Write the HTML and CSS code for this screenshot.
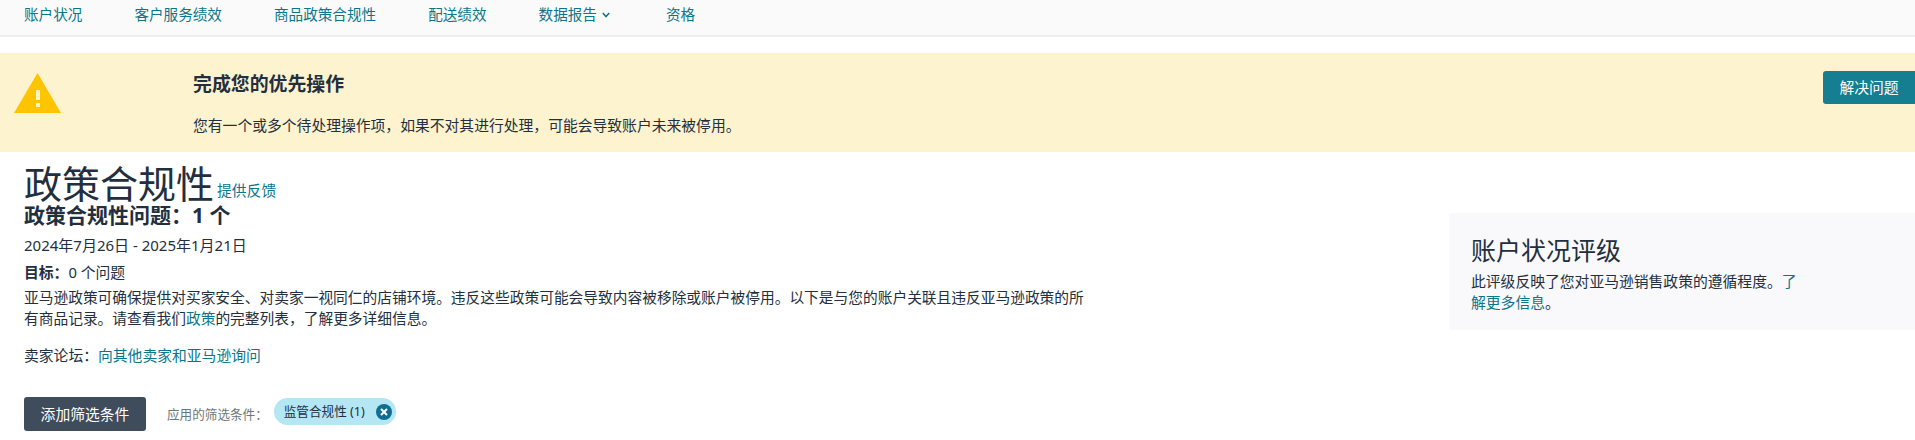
FILE: index.html
```html
<!DOCTYPE html>
<html lang="zh-CN">
<head>
<meta charset="utf-8">
<title>政策合规性</title>
<link rel="stylesheet" href="styles.css">
</head>
<body>
<nav class="tabs">
  <a class="tab" href="#">账户状况</a>
  <a class="tab" href="#">客户服务绩效</a>
  <a class="tab" href="#">商品政策合规性</a>
  <a class="tab" href="#">配送绩效</a>
  <a class="tab tab-menu" href="#">数据报告
    <svg class="chevron" viewBox="0 0 8 6" width="8" height="6"><path d="M.8 1 4 4.6 7.2 1" fill="none" stroke="currentColor" stroke-width="1.5"/></svg>
  </a>
  <a class="tab" href="#">资格</a>
</nav>
<section class="alert">
  <div class="alert-icon">
    <svg viewBox="0 0 47 40" width="47" height="40"><path d="M23.5 0 47 40H0Z" fill="#ffc400"/><path d="M22 17h4v10h-4zM22 30h4v4h-4z" fill="#fef3cf"/></svg>
  </div>
  <div class="alert-body">
    <h2 class="alert-title">完成您的优先操作</h2>
    <p class="alert-text">您有一个或多个待处理操作项，如果不对其进行处理，可能会导致账户未来被停用。</p>
  </div>
  <a class="resolve" href="#">解决问题</a>
</section>
<main class="content">
  <div class="details">
    <div class="title-row">
      <h1 class="title">政策合规性</h1>
      <a class="link" href="#">提供反馈</a>
    </div>
    <h2 class="count">政策合规性问题：1 个</h2>
    <p class="dates">2024年7月26日 - 2025年1月21日</p>
    <p class="goal"><b class="goal-label">目标：</b>0 个问题</p>
    <p class="intro">亚马逊政策可确保提供对买家安全、对卖家一视同仁的店铺环境。违反这些政策可能会导致内容被移除或账户被停用。以下是与您的账户关联且违反亚马逊政策的所有商品记录。请查看我们<a class="link" href="#">政策</a>的完整列表，了解更多详细信息。</p>
    <p class="forum">卖家论坛：<a class="link" href="#">向其他卖家和亚马逊询问</a></p>
    <div class="filters">
      <button class="add-filter" type="button">添加筛选条件</button>
      <span class="filter-label">应用的筛选条件：</span>
      <span class="chip">监管合规性 (1)
        <svg class="chip-close" viewBox="0 0 16 16" width="16" height="16"><circle cx="8" cy="8" r="8" fill="#0f6f93"/><path d="M5 5l6 6M11 5l-6 6" stroke="#fff" stroke-width="2"/></svg>
      </span>
    </div>
  </div>
  <aside class="rating">
    <h2 class="rating-title">账户状况评级</h2>
    <p class="rating-text">此评级反映了您对亚马逊销售政策的遵循程度。<a class="link" href="#">了解更多信息</a>。</p>
  </aside>
</main>
</body>
</html>
```
FILE: styles.css
```css
* { box-sizing: border-box; }
html, body { margin: 0; padding: 0; }
body {
  background: #fff;
  color: #232f3e;
  font-family: "Noto Sans", "Noto Sans CJK SC", sans-serif;
  font-size: 14.8px;
  line-height: 21px;
}
h1, h2, p { margin: 0; font-weight: 400; }
a { text-decoration: none; }
.link { color: #0a7688; }

.tabs {
  display: flex;
  gap: 52px;
  height: 37px;
  padding: 4px 0 0 24px;
  background: #fafafa;
  border-bottom: 2px solid #eeeeee;
  font-size: 14.6px;
}
.tab { color: #0a7688; }
.tab-menu { display: flex; align-items: center; gap: 5px; height: 21px; margin-right: 4px; }
.chevron { display: block; }

.alert {
  display: flex;
  align-items: flex-start;
  height: 99px;
  margin-top: 16px;
  padding-top: 18px;
  background: #fef3cf;
}
.alert-icon { width: 193px; padding: 2px 0 0 14px; flex: none; }
.alert-icon svg { display: block; }
.alert-body { flex: 1; }
.alert-title { font-size: 18.9px; font-weight: 700; line-height: 26px; }
.alert-text { margin-top: 18px; }
.resolve {
  width: 92px;
  height: 33px;
  line-height: 33px;
  text-align: center;
  color: #fff;
  background: #157e90;
  border-radius: 3px 0 0 3px;
}

.content { display: flex; justify-content: space-between; align-items: flex-start; }
.details { width: 1070px; margin-left: 24px; padding-top: 10px; }
.title-row { display: flex; align-items: flex-end; gap: 3px; height: 42px; }
.title { font-size: 38px; line-height: 42px; }
.title-row .link { line-height: 21px; margin-bottom: 3px; }
.count { font-size: 21px; font-weight: 700; line-height: 22px; }
.dates { margin-top: 9px; font-size: 15px; }
.goal { margin-top: 6px; }
.goal-label { font-weight: 700; }
.intro { margin-top: 4px; font-size: 14.72px; }
.forum { margin-top: 16px; }
.filters { display: flex; align-items: center; margin-top: 31px; }
.add-filter {
  width: 122px;
  height: 34px;
  padding: 0;
  border: 0;
  border-radius: 3px;
  background: #3f4c5c;
  color: #fff;
  font: inherit;
}
.filter-label { margin-left: 21px; color: #6c7778; font-size: 12.6px; }
.chip {
  display: flex;
  align-items: center;
  justify-content: space-between;
  width: 122px;
  height: 27px;
  margin: 0 0 5px 6px;
  padding: 0 4px 0 10px;
  border-radius: 14px;
  background: #b5e6f3;
  font-size: 12.6px;
}
.chip-close { display: block; flex: none; }

.rating {
  width: 466px;
  margin-top: 61px;
  padding: 22px 22px 17px;
  background: #f9f9fb;
  border-radius: 3px 0 0 3px;
}
.rating-title { font-size: 25px; line-height: 30px; }
.rating-text { width: 332px; margin-top: 6px; }
```
